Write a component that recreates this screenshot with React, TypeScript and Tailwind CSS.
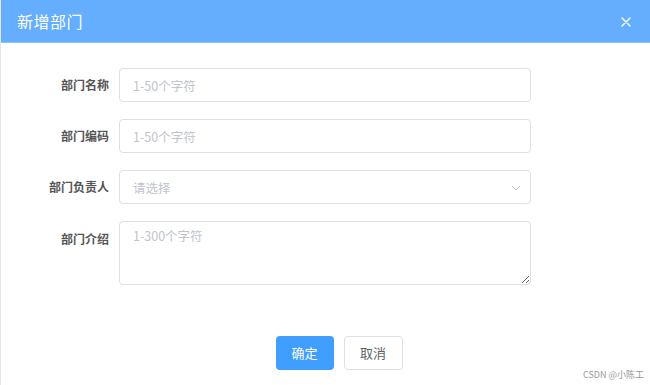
import { useState } from "react";

const font = {
  fontFamily: '"Microsoft YaHei", "Noto Sans CJK SC", "Liberation Sans", sans-serif',
};

type Field = {
  label: string;
  placeholder: string;
  kind: "input" | "select" | "textarea";
};

const fields: Field[] = [
  { label: "部门名称", placeholder: "1-50个字符", kind: "input" },
  { label: "部门编码", placeholder: "1-50个字符", kind: "input" },
  { label: "部门负责人", placeholder: "请选择", kind: "select" },
  { label: "部门介绍", placeholder: "1-300个字符", kind: "textarea" },
];

export default function App() {
  const [values, setValues] = useState<Record<string, string>>({});

  return (
    <div className="w-[650px] h-[385px] bg-white overflow-hidden relative border-l border-[#e6e6e6]" style={font}>
      {/* ヘッダー */}
      <div className="h-[43px] bg-[#64aefd] flex items-center justify-between pl-[16px] pr-[19px] border-b border-[#8cc4ff]">
        <span className="text-white text-[16px] tracking-[0.5px]">新增部门</span>
        <svg width="10" height="10" viewBox="0 0 10 10" className="mt-[1px]">
          <path d="M1 1 L9 9 M9 1 L1 9" stroke="white" strokeWidth="1.4" strokeLinecap="round" />
        </svg>
      </div>

      {/* フォーム */}
      <div className="pt-[25px] flex flex-col gap-[17px]">
        {fields.map((f) => (
          <div key={f.label} className={`flex ${f.kind === "textarea" ? "items-start" : "items-center"}`}>
            <label
              className={`w-[108px] text-right text-[12px] font-bold text-[#555] ${f.kind === "textarea" ? "pt-[9px]" : ""}`}
            >
              {f.label}
            </label>
            <div className="ml-[10px] w-[412px] relative">
              {f.kind === "textarea" ? (
                <textarea
                  value={values[f.label] ?? ""}
                  onChange={(e) => setValues({ ...values, [f.label]: e.target.value })}
                  placeholder={f.placeholder}
                  className="block w-full h-[64px] rounded-[4px] border border-[#dcdfe6] px-[13px] py-[5px] text-[12.5px] text-[#606266] placeholder:text-[#c0c4cc] outline-none"
                />
              ) : (
                <input
                  type="text"
                  readOnly={f.kind === "select"}
                  value={values[f.label] ?? ""}
                  onChange={(e) => setValues({ ...values, [f.label]: e.target.value })}
                  placeholder={f.placeholder}
                  className="block w-full h-[34px] rounded-[4px] border border-[#dcdfe6] px-[13px] text-[12.5px] text-[#606266] placeholder:text-[#c0c4cc] outline-none"
                />
              )}
              {f.kind === "select" && (
                <svg width="10" height="6" viewBox="0 0 10 6" className="absolute right-[10px] top-[15px]">
                  <path d="M1 1 L5 5 L9 1" stroke="#c0c4cc" strokeWidth="1" fill="none" />
                </svg>
              )}
            </div>
          </div>
        ))}
      </div>

      {/* フッター */}
      <div className="mt-[51px] flex justify-center gap-[10px] pl-[27px]">
        <button className="w-[58px] h-[34px] rounded-[4px] bg-[#409eff] text-white text-[13px]">确定</button>
        <button className="w-[59px] h-[34px] rounded-[4px] border border-[#dcdfe6] bg-white text-[#606266] text-[13px]">
          取消
        </button>
      </div>

      <span className="absolute right-[6px] bottom-[4px] text-[9px] text-[#999]">CSDN @小陈工</span>
    </div>
  );
}
